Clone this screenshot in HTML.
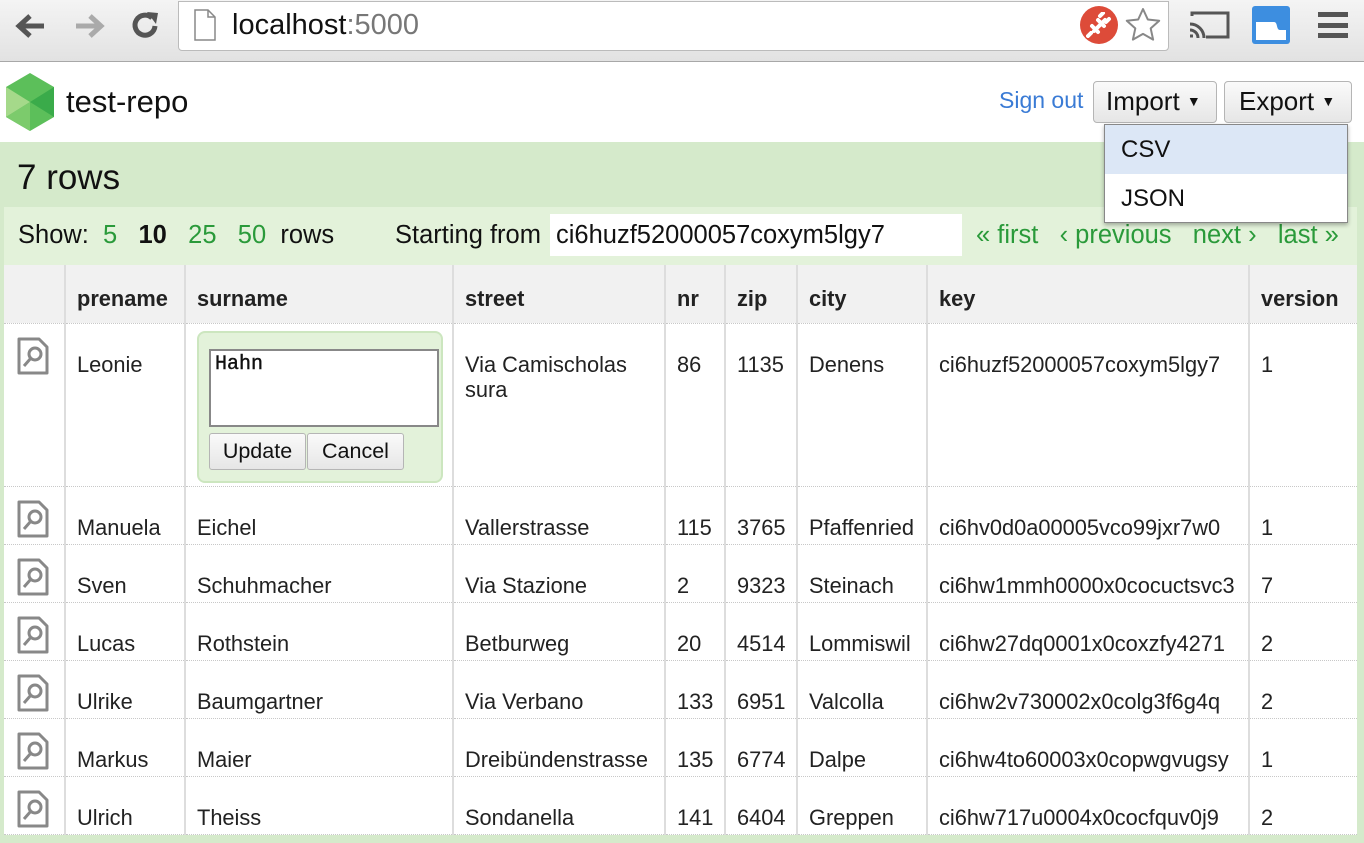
<!DOCTYPE html>
<html><head><meta charset="utf-8"><style>
*{margin:0;padding:0;box-sizing:border-box}
body{width:1364px;height:843px;overflow:hidden;font-family:"Liberation Sans",Arial,sans-serif;color:#222;background:#d5eacb;position:relative}
.abs{position:absolute}
#chrome{left:0;top:0;width:1364px;height:62px;background:linear-gradient(#f4f4f4,#e2e2e2);border-bottom:1px solid #a8a8a8}
#url{left:178px;top:1px;width:991px;height:50px;background:#fff;border:1px solid #bbb;border-radius:0 0 4px 4px}
#hdr{left:0;top:62px;width:1364px;height:80px;background:#fff}
.btn{background:linear-gradient(#fafafa,#e6e6e6);border:1px solid #b5b5b5;border-radius:4px;font-size:26px;color:#111}
.g{color:#2a9a3a}
table{border-collapse:collapse;table-layout:fixed;position:absolute;left:4px;top:265px;width:1353px;background:#fff;font-size:21.8px;line-height:25px}
td,th{border-left:2px solid #ddd;border-bottom:1px dotted #c8c8c8;vertical-align:top;text-align:left;padding:0 11px;overflow:visible;white-space:nowrap}
th{background:#f1f1f1;height:58px;vertical-align:top;padding-top:21px;font-weight:bold}
td{padding-top:28px;height:56px}
td:first-child,th:first-child{border-left:none}
td.ic{padding:12px 0 0 12px}
</style></head><body>
<div id="chrome" class="abs"></div>
<svg class="abs" style="left:10px;top:8px" width="160" height="36" viewBox="0 0 160 36">
<path d="M34 18H10M20 8 9 18l11 10" stroke="#555" stroke-width="5" fill="none"/>
<path d="M66 18h24M80 8l11 10-11 10" stroke="#aaa" stroke-width="5" fill="none"/>
<path d="M142 10a10 10 0 1 0 3 8" stroke="#555" stroke-width="5" fill="none"/><path d="M137 4l11 1-2 11z" fill="#555"/>
</svg>
<div id="url" class="abs"></div>
<svg class="abs" style="left:193px;top:9px" width="24" height="32"><path d="M2 1h13l7 7v23H2z" fill="#fff" stroke="#888" stroke-width="1.5"/><path d="M15 1v7h7" fill="none" stroke="#888" stroke-width="1.5"/></svg>
<div class="abs" style="left:232px;top:9px;font-size:29px;color:#111">localhost<span style="color:#777">:5000</span></div>
<div class="abs" style="left:1080px;top:6px;width:38px;height:38px;border-radius:50%;background:#dd4b39"></div>
<svg class="abs" style="left:1086px;top:12px" width="26" height="26"><path d="M8 19 19 8M6 14l6 6M12 8l6 6M5 21l-3 3M14 4l3-3M20 10l3-3" stroke="#fff" stroke-width="4" stroke-linecap="round"/></svg>
<svg class="abs" style="left:1124px;top:6px" width="38" height="38" viewBox="0 0 38 38"><path d="M19 3l4.8 10.5 11.4 1.2-8.5 7.7 2.4 11.2L19 27.9l-10.1 5.7 2.4-11.2-8.5-7.7 11.4-1.2z" fill="#fff" stroke="#888" stroke-width="2" stroke-linejoin="round"/></svg>
<svg class="abs" style="left:1188px;top:10px" width="44" height="32"><path d="M4 6V3h36v24H18" stroke="#555" stroke-width="3" fill="none"/><path d="M2 14a14 14 0 0 1 14 14M2 20a8 8 0 0 1 8 8M2 26h3" stroke="#555" stroke-width="3" fill="none"/></svg>
<div class="abs" style="left:1252px;top:6px;width:38px;height:38px;background:#3d8ee0;border-radius:3px"><svg width="38" height="38"><path d="M4 16h18c4 0 2 8 6 8h6v10H4z" fill="#fff"/></svg></div>
<div class="abs" style="left:1318px;top:12px;width:30px;height:26px;border-top:5px solid #555;border-bottom:5px solid #555"><div style="margin-top:6px;height:5px;background:#555"></div></div>
<div id="hdr" class="abs"></div>
<svg class="abs" style="left:5px;top:73px" width="50" height="58" viewBox="0 0 50 58"><polygon points="25,0 49,14 49,44 25,58 1,44 1,14" fill="#5cbf5a"/><polygon points="25,29 49,14 49,44" fill="#3aab4a"/><polygon points="1,14 25,29 1,44" fill="#a5d98a"/><polygon points="25,29 1,44 25,58" fill="#7ccb6c"/></svg>
<div class="abs" style="left:66px;top:84px;font-size:31px;color:#111">test-repo</div>
<div class="abs" style="left:999px;top:87px;font-size:23px;color:#3a7bd5">Sign out</div>
<div class="abs btn" style="left:1093px;top:81px;width:124px;height:42px;padding:4px 0 0 12px">Import <span style="font-size:14px;vertical-align:4px">▼</span></div>
<div class="abs btn" style="left:1224px;top:81px;width:128px;height:42px;padding:4px 0 0 14px">Export <span style="font-size:14px;vertical-align:4px">▼</span></div>
<div class="abs" style="left:17px;top:158px;font-size:35px;color:#111">7 rows</div>
<div class="abs" style="left:4px;top:207px;width:1353px;height:58px;background:#e3f2da"></div>
<div class="abs" style="left:18px;top:221px;font-size:25.5px;color:#111;white-space:nowrap">Show: &nbsp;<span class="g">5</span> &nbsp; <b>10</b> &nbsp; <span class="g">25</span> &nbsp; <span class="g">50</span> &nbsp;rows</div>
<div class="abs" style="left:395px;top:221px;font-size:25.5px;color:#111">Starting from</div>
<div class="abs" style="left:550px;top:214px;width:412px;height:42px;background:#fff;font-size:25.5px;padding:7px 0 0 6px;color:#111;white-space:nowrap">ci6huzf52000057coxym5lgy7</div>
<div class="abs g" style="left:976px;top:221px;font-size:25.5px;white-space:nowrap">« first &nbsp; ‹ previous &nbsp; next › &nbsp; last »</div>
<table>
<colgroup><col style="width:61px"><col style="width:120px"><col style="width:268px"><col style="width:212px"><col style="width:60px"><col style="width:72px"><col style="width:130px"><col style="width:322px"><col></colgroup>
<tr><th></th><th>prename</th><th>surname</th><th>street</th><th>nr</th><th>zip</th><th>city</th><th>key</th><th>version</th></tr>
<tr><td class="ic" style="height:163px"><svg width="34" height="40"><path d="M3 3h20l8 8v26H3z" fill="none" stroke="#888" stroke-width="3" stroke-linejoin="round"/><circle cx="19" cy="18" r="6" fill="none" stroke="#888" stroke-width="3"/><path d="M15 22l-7 8" stroke="#888" stroke-width="3"/></svg></td><td>Leonie</td>
<td style="padding:7px 11px 0 11px"><div style="background:#e3f2da;border:2px solid #cce6bf;border-radius:8px;width:246px;height:152px;padding:16px 0 0 10px">
<div style="width:230px;height:78px;background:#fff;border:2px solid #888;font-family:'Liberation Mono',monospace;font-size:20px;line-height:22px;padding:3px 4px;color:#111;-webkit-text-stroke:0.4px #111">Hahn</div>
<div style="margin-top:6px;display:flex"><span class="btn" style="display:inline-block;width:97px;height:37px;text-align:center;font-size:21.5px;line-height:34px;border-radius:3px">Update</span><span class="btn" style="display:inline-block;width:97px;height:37px;text-align:center;font-size:21.5px;line-height:34px;border-radius:3px;margin-left:1px">Cancel</span></div></div></td>
<td style="white-space:normal">Via Camischolas sura</td><td>86</td><td>1135</td><td>Denens</td><td>ci6huzf52000057coxym5lgy7</td><td>1</td></tr>
<tr><td class="ic"><svg width="34" height="40"><path d="M3 3h20l8 8v26H3z" fill="none" stroke="#888" stroke-width="3" stroke-linejoin="round"/><circle cx="19" cy="18" r="6" fill="none" stroke="#888" stroke-width="3"/><path d="M15 22l-7 8" stroke="#888" stroke-width="3"/></svg></td><td>Manuela</td><td>Eichel</td><td>Vallerstrasse</td><td>115</td><td>3765</td><td>Pfaffenried</td><td>ci6hv0d0a00005vco99jxr7w0</td><td>1</td></tr>
<tr><td class="ic"><svg width="34" height="40"><path d="M3 3h20l8 8v26H3z" fill="none" stroke="#888" stroke-width="3" stroke-linejoin="round"/><circle cx="19" cy="18" r="6" fill="none" stroke="#888" stroke-width="3"/><path d="M15 22l-7 8" stroke="#888" stroke-width="3"/></svg></td><td>Sven</td><td>Schuhmacher</td><td>Via Stazione</td><td>2</td><td>9323</td><td>Steinach</td><td>ci6hw1mmh0000x0cocuctsvc3</td><td>7</td></tr>
<tr><td class="ic"><svg width="34" height="40"><path d="M3 3h20l8 8v26H3z" fill="none" stroke="#888" stroke-width="3" stroke-linejoin="round"/><circle cx="19" cy="18" r="6" fill="none" stroke="#888" stroke-width="3"/><path d="M15 22l-7 8" stroke="#888" stroke-width="3"/></svg></td><td>Lucas</td><td>Rothstein</td><td>Betburweg</td><td>20</td><td>4514</td><td>Lommiswil</td><td>ci6hw27dq0001x0coxzfy4271</td><td>2</td></tr>
<tr><td class="ic"><svg width="34" height="40"><path d="M3 3h20l8 8v26H3z" fill="none" stroke="#888" stroke-width="3" stroke-linejoin="round"/><circle cx="19" cy="18" r="6" fill="none" stroke="#888" stroke-width="3"/><path d="M15 22l-7 8" stroke="#888" stroke-width="3"/></svg></td><td>Ulrike</td><td>Baumgartner</td><td>Via Verbano</td><td>133</td><td>6951</td><td>Valcolla</td><td>ci6hw2v730002x0colg3f6g4q</td><td>2</td></tr>
<tr><td class="ic"><svg width="34" height="40"><path d="M3 3h20l8 8v26H3z" fill="none" stroke="#888" stroke-width="3" stroke-linejoin="round"/><circle cx="19" cy="18" r="6" fill="none" stroke="#888" stroke-width="3"/><path d="M15 22l-7 8" stroke="#888" stroke-width="3"/></svg></td><td>Markus</td><td>Maier</td><td>Dreibündenstrasse</td><td>135</td><td>6774</td><td>Dalpe</td><td>ci6hw4to60003x0copwgvugsy</td><td>1</td></tr>
<tr><td class="ic"><svg width="34" height="40"><path d="M3 3h20l8 8v26H3z" fill="none" stroke="#888" stroke-width="3" stroke-linejoin="round"/><circle cx="19" cy="18" r="6" fill="none" stroke="#888" stroke-width="3"/><path d="M15 22l-7 8" stroke="#888" stroke-width="3"/></svg></td><td>Ulrich</td><td>Theiss</td><td>Sondanella</td><td>141</td><td>6404</td><td>Greppen</td><td>ci6hw717u0004x0cocfquv0j9</td><td>2</td></tr>
</table>
<div class="abs" style="left:1104px;top:124px;width:244px;height:99px;background:#fff;border:1px solid #888;box-shadow:0 2px 4px rgba(0,0,0,.3);font-size:24px;color:#111">
<div style="height:49px;background:#dce7f6;padding:11px 0 0 16px">CSV</div>
<div style="padding:11px 0 0 16px">JSON</div></div>
</body></html>
